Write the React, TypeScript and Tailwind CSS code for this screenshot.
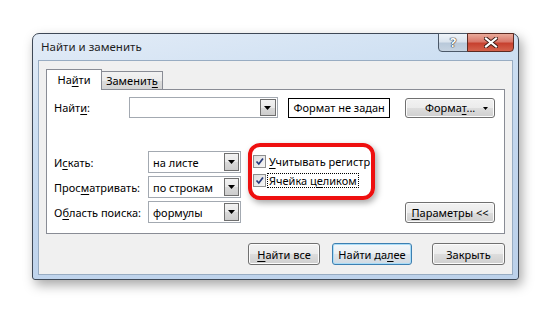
import React from "react";

const U = ({ children }: { children: React.ReactNode }) => (
  <span className="underline decoration-1 underline-offset-[2px]">{children}</span>
);

function Arrow() {
  return (
    <svg width="7" height="4" viewBox="0 0 7 4">
      <path d="M0 0H7L3.5 4Z" fill="#000" />
    </svg>
  );
}

function Combo({ w, text, bw }: { w: string; text?: string; bw: string }) {
  return (
    <div className={`flex h-full bg-white border border-[#a3a9b1] p-[1px] ${w}`}>
      <div className="flex-1 pl-[3px] flex items-center whitespace-nowrap">{text}</div>
      <div
        className={`${bw} flex items-center justify-center border border-[#6f6f6f] bg-[linear-gradient(to_bottom,#f2f2f2_0%,#e9e9e9_50%,#d9d9d9_51%,#cdcdcd_100%)]`}
      >
        <Arrow />
      </div>
    </div>
  );
}

function Btn({
  children,
  className,
  def,
}: {
  children: React.ReactNode;
  className: string;
  def?: boolean;
}) {
  return (
    <div
      className={`flex items-center justify-center rounded-[3px] border whitespace-nowrap ${
        def
          ? "border-[#3c7fb1] shadow-[inset_0_0_0_1px_#a9dcf7] bg-[linear-gradient(to_bottom,#f3f7fa_0%,#e9eef2_50%,#dde4ea_51%,#d1dae2_100%)]"
          : "border-[#707070] shadow-[inset_0_0_0_1px_#fcfcfc] bg-[linear-gradient(to_bottom,#f2f2f2_0%,#ebebeb_50%,#dddddd_51%,#cfcfcf_100%)]"
      } ${className}`}
    >
      {children}
    </div>
  );
}

function Check() {
  return (
    <div className="w-[13px] h-[13px] border border-[#8e8f8f] bg-[linear-gradient(135deg,#dcdcdc_0%,#f7f7f7_100%)] p-[1px] shrink-0">
      <svg width="11" height="11" viewBox="0 0 11 11" className="block -ml-[1px] -mt-[1px]">
        <path d="M2.5 5.5 L4.8 8 L9 2.5" stroke="#24397a" strokeWidth="1.7" fill="none" />
      </svg>
    </div>
  );
}

export default function App() {
  return (
    <div className="w-[553px] h-[313px] bg-white pt-[33px] pl-[32px] font-['Noto_Sans',sans-serif] text-[11px] text-black leading-[15px] overflow-hidden">
      <div className="w-[487px] h-[247px] flex flex-col border border-[#3e4856] rounded-t-[7px] rounded-b-[3px] px-[5px] pb-[4px] bg-[linear-gradient(170deg,#e3ecf7_0%,#cddff2_30%,#c2d6ee_60%,#bcd1ea_100%)] shadow-[3px_5px_12px_rgba(0,0,0,0.35)]">
        {/* title bar */}
        <div className="h-[26px] flex justify-between items-start">
          <div className="pl-[3px] mt-[5px] text-[11.5px] text-[#1e1e1e]">Найти и заменить</div>
          <div className="flex -mt-[1px] -mr-[1px] h-[19px]">
            <div className="w-[30px] h-full border border-[#4b5868] rounded-bl-[4px] flex items-center justify-center bg-[linear-gradient(to_bottom,#eef3f8_0%,#dbe4ee_45%,#b9c9da_55%,#c6d3e1_100%)]">
              <span className="text-white font-bold text-[13px] leading-none [text-shadow:0_0_1px_#202830,0_0_1px_#202830,0_0_1px_#202830]">?</span>
            </div>
            <div className="w-[47px] h-full -ml-[1px] border border-[#5c2a22] rounded-br-[4px] flex items-center justify-center bg-[linear-gradient(to_bottom,#e9aa9a_0%,#d9786a_45%,#c7412f_55%,#d4624c_100%)]">
              <svg width="14" height="11" viewBox="0 0 14 11">
                <path d="M2 1.5 L12 9.5 M12 1.5 L2 9.5" stroke="#3b1a14" strokeWidth="4" strokeLinecap="square" />
                <path d="M2 1.5 L12 9.5 M12 1.5 L2 9.5" stroke="#ffffff" strokeWidth="2.2" strokeLinecap="square" />
              </svg>
            </div>
          </div>
        </div>

        {/* client */}
        <div className="flex-1 flex flex-col bg-[#f0f0f0] border border-[#98acc2]">
          {/* tabs */}
          <div className="flex items-end ml-[7px] mt-[8px] h-[20px]">
            <div className="h-[21px] -mb-[1px] z-10 w-[56px] bg-white border border-b-0 border-[#898c95] flex items-center justify-center pb-[1px]">
              На<U>й</U>ти
            </div>
            <div className="h-[18px] w-[62px] -ml-[1px] border border-b-0 border-[#898c95] flex items-center justify-center bg-[linear-gradient(to_bottom,#f2f2f2_0%,#ebebeb_50%,#dddddd_51%,#d4d4d4_100%)]">
              Заменит<U>ь</U>
            </div>
          </div>

          {/* panel */}
          <div className="ml-[7px] mr-[7px] h-[145px] bg-white border border-[#898c95] pt-[7px] pl-[7px] pr-[9px] pb-[10px] flex flex-col">
            {/* row 1 */}
            <div className="flex items-center h-[21px]">
              <div className="w-[75px]">
                Найт<U>и</U>:
              </div>
              <Combo w="w-[150px]" bw="w-[16px]" />
              <div className="ml-[10px] w-[103px] h-[20px] border border-black bg-white flex items-center justify-center whitespace-nowrap">
                Формат не задан
              </div>
              <Btn className="ml-[15px] w-[90px] h-[20px] relative">
                <span>
                  Форма<U>т</U>...
                </span>
                <span className="absolute right-[6px] top-[8px] flex">
                  <svg width="5" height="3" viewBox="0 0 5 3">
                    <path d="M0 0H5L2.5 3Z" fill="#000" />
                  </svg>
                </span>
              </Btn>
            </div>

            {/* lower */}
            <div className="flex items-start mt-[25px] flex-1">
              <div className="flex flex-col gap-[3px] pt-[8px] w-[187px]">
                <div className="flex items-center h-[22px]">
                  <div className="w-[94px] whitespace-nowrap">
                    И<U>с</U>кать:
                  </div>
                  <Combo w="w-[93px]" bw="w-[15px]" text="на листе" />
                </div>
                <div className="flex items-center h-[22px]">
                  <div className="w-[94px] whitespace-nowrap">
                    Прос<U>м</U>атривать:
                  </div>
                  <Combo w="w-[93px]" bw="w-[15px]" text="по строкам" />
                </div>
                <div className="flex items-center h-[22px]">
                  <div className="w-[94px] whitespace-nowrap">
                    О<U>б</U>ласть поиска:
                  </div>
                  <Combo w="w-[93px]" bw="w-[15px]" text="формулы" />
                </div>
              </div>

              <div className="ml-[7px] w-[127px] h-[57px] shrink-0 border-[4px] border-[#ee0f0f] rounded-[12px] pl-[1px] pt-[8px] flex flex-col gap-[6px] shadow-[2px_3px_6px_rgba(0,0,0,0.35)]">
                <div className="flex items-center h-[13px]">
                  <Check />
                  <span className="ml-[1px] px-[1px] border border-transparent whitespace-nowrap leading-[13px]">
                    <U>У</U>читывать регистр
                  </span>
                </div>
                <div className="flex items-center h-[13px]">
                  <Check />
                  <span className="ml-[1px] px-[1px] border border-dotted border-black whitespace-nowrap leading-[13px]">
                    Ячейка ц<U>е</U>ликом
                  </span>
                </div>
              </div>

              <Btn className="ml-auto self-end w-[90px] h-[21px]">
                <span>
                  <U>П</U>араметры &lt;&lt;
                </span>
              </Btn>
            </div>
          </div>

          {/* bottom buttons */}
          <div className="flex justify-end mt-[9px] mr-[7px] h-[22px]">
            <Btn className="w-[72px] h-full">
              <span>
                <U>Н</U>айти все
              </span>
            </Btn>
            <Btn def className="ml-[12px] w-[80px] h-full">
              <span>
                Найти да<U>л</U>ее
              </span>
            </Btn>
            <Btn className="ml-[20px] w-[73px] h-full">
              <span>Закрыть</span>
            </Btn>
          </div>
        </div>
      </div>
    </div>
  );
}
